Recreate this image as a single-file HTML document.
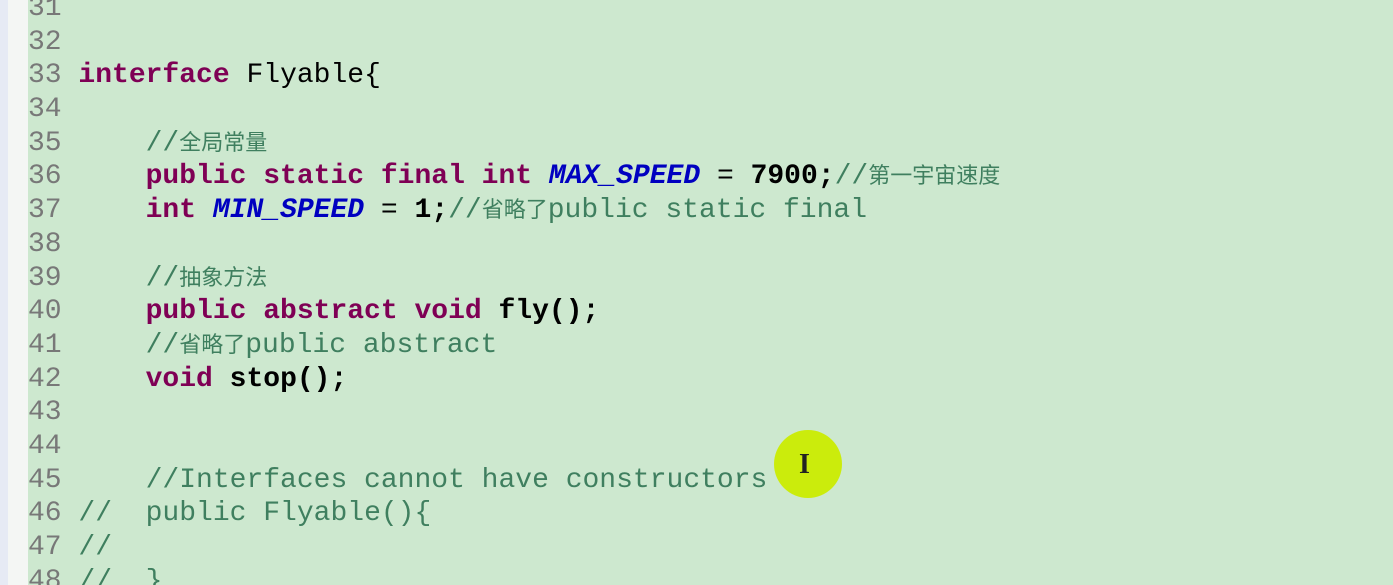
<!DOCTYPE html>
<html><head><meta charset="utf-8"><style>
html,body{margin:0;padding:0;width:1393px;height:585px;overflow:hidden;background:#cde8cf;position:relative;}
.l1{position:absolute;left:0;top:0;width:8px;height:585px;background:#e6eaf4;}
.l2{position:absolute;left:8px;top:0;width:20px;height:585px;background:#f4f6f4;}
.code{position:absolute;left:28px;top:-8px;font-family:"Liberation Mono","Noto Sans CJK SC",monospace;font-size:28px;color:#000;}
.code div{height:33.7px;line-height:33.7px;white-space:pre;overflow:visible;}
.n{color:#787878;}
.k{color:#7f0055;font-weight:bold;}
.c{color:#3f7f5f;}
.c i{font-style:normal;font-size:22px;line-height:20px;font-family:"Noto Sans CJK SC",sans-serif;vertical-align:baseline;}
.v{color:#0000c0;font-style:italic;font-weight:bold;}
.b{font-weight:bold;}
.dot{position:absolute;left:774px;top:430px;width:68px;height:68px;border-radius:50%;background:#cbec0c;}
.cur{position:absolute;left:799px;top:450px;font-family:"Liberation Serif",serif;font-weight:bold;font-size:28px;color:#222;line-height:30px;}
</style></head><body>
<div class="l1"></div><div class="l2"></div>
<div class="dot"></div><div class="cur">I</div>
<div class="code">
<div><span class="n">31</span></div>
<div><span class="n">32</span></div>
<div><span class="n">33</span> <span class="k">interface</span> Flyable{</div>
<div><span class="n">34</span></div>
<div><span class="n">35</span>     <span class="c">//<i>全局常量</i></span></div>
<div><span class="n">36</span>     <span class="k">public static final int</span> <span class="v">MAX_SPEED</span> = <span class="b">7900;</span><span class="c">//<i>第一宇宙速度</i></span></div>
<div><span class="n">37</span>     <span class="k">int</span> <span class="v">MIN_SPEED</span> = <span class="b">1;</span><span class="c">//<i>省略了</i>public static final</span></div>
<div><span class="n">38</span></div>
<div><span class="n">39</span>     <span class="c">//<i>抽象方法</i></span></div>
<div><span class="n">40</span>     <span class="k">public abstract void</span> <span class="b">fly();</span></div>
<div><span class="n">41</span>     <span class="c">//<i>省略了</i>public abstract</span></div>
<div><span class="n">42</span>     <span class="k">void</span> <span class="b">stop();</span></div>
<div><span class="n">43</span></div>
<div><span class="n">44</span></div>
<div><span class="n">45</span>     <span class="c">//Interfaces cannot have constructors</span></div>
<div><span class="n">46</span> <span class="c">//  public Flyable(){</span></div>
<div><span class="n">47</span> <span class="c">//</span></div>
<div><span class="n">48</span> <span class="c">//  }</span></div>
</div>
</body></html>
